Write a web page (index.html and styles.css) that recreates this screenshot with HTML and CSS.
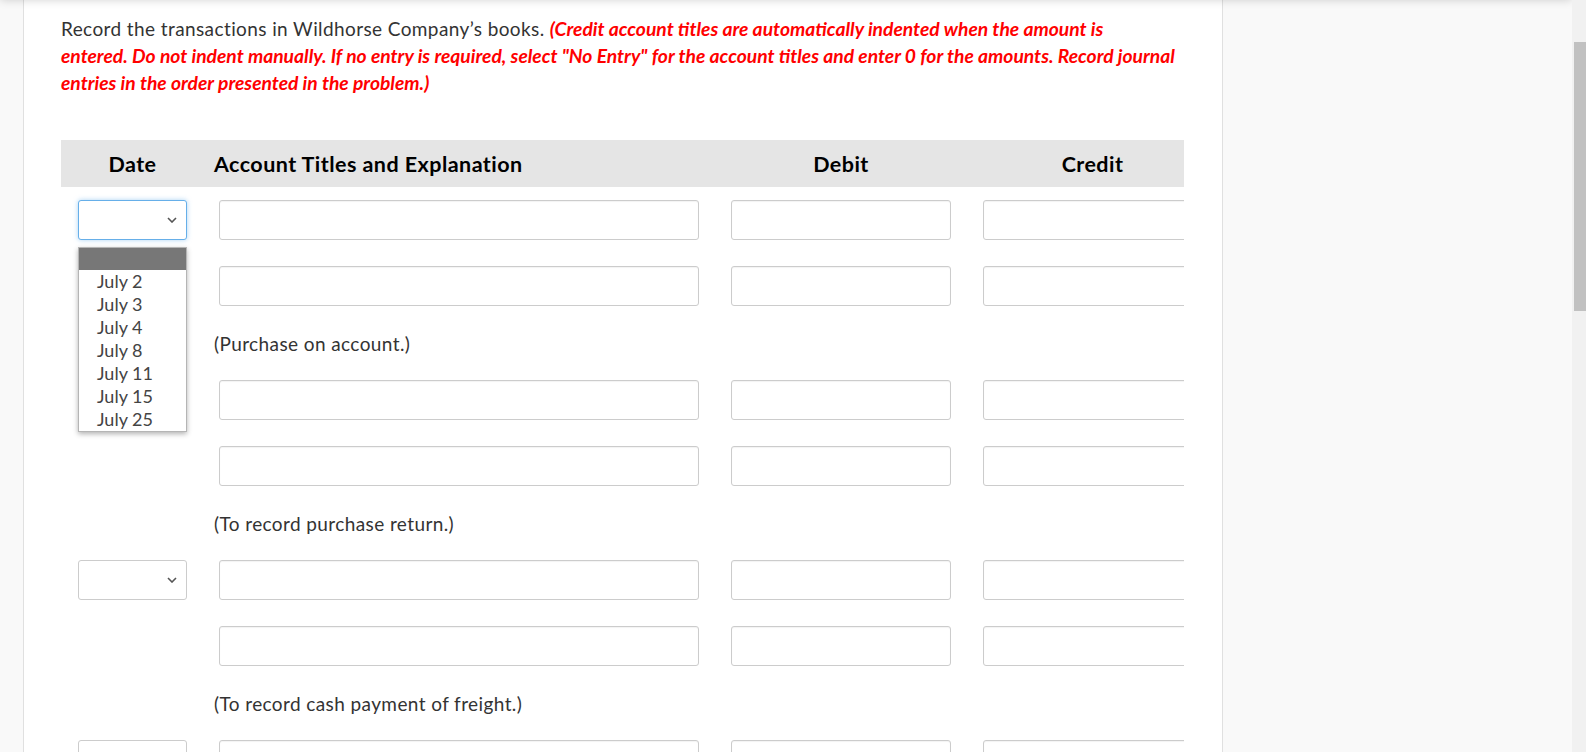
FILE: index.html
```html
<!DOCTYPE html>
<html lang="en">
<head>
<meta charset="utf-8">
<title>Journal entries</title>
<link rel="stylesheet" href="styles.css">
</head>
<body>
<div class="viewport">
  <div class="page">
    <div class="topshade"></div>
    <main class="panel">
      <p class="instructions">Record the transactions in Wildhorse Company’s books. <em class="note">(Credit account titles are automatically indented when the amount is<br>entered. Do not indent manually. If no entry is required, select "No Entry" for the account titles and enter 0 for the amounts. Record journal<br>entries in the order presented in the problem.)</em></p>

      <div class="journal">
        <div class="jrow head">
          <div class="h-date">Date</div>
          <div class="h-acct">Account Titles and Explanation</div>
          <div class="h-num">Debit</div>
          <div class="h-num">Credit</div>
        </div>

        <div class="entries">
          <div class="entry">
            <div class="jrow line">
              <div class="datecell">
                <div class="select focus">
                  <svg class="chev" width="10" height="6" viewBox="0 0 10 6"><polyline points="1,1 5,5 9,1" fill="none" stroke="#555" stroke-width="1.6"/></svg>
                </div>
                <div class="dropdown">
                  <div class="opt-blank"></div>
                  <div class="opt">July 2</div>
                  <div class="opt">July 3</div>
                  <div class="opt">July 4</div>
                  <div class="opt">July 8</div>
                  <div class="opt">July 11</div>
                  <div class="opt">July 15</div>
                  <div class="opt">July 25</div>
                </div>
              </div>
              <input class="field" type="text">
              <input class="field" type="text">
              <input class="field" type="text">
            </div>
            <div class="jrow line">
              <div></div>
              <input class="field" type="text">
              <input class="field" type="text">
              <input class="field" type="text">
            </div>
            <div class="jrow expl">
              <div></div>
              <div class="expl-text">(Purchase on account.)</div>
            </div>
          </div>

          <div class="entry">
            <div class="jrow line">
              <div></div>
              <input class="field" type="text">
              <input class="field" type="text">
              <input class="field" type="text">
            </div>
            <div class="jrow line">
              <div></div>
              <input class="field" type="text">
              <input class="field" type="text">
              <input class="field" type="text">
            </div>
            <div class="jrow expl">
              <div></div>
              <div class="expl-text">(To record purchase return.)</div>
            </div>
          </div>

          <div class="entry">
            <div class="jrow line">
              <div class="datecell">
                <div class="select">
                  <svg class="chev" width="10" height="6" viewBox="0 0 10 6"><polyline points="1,1 5,5 9,1" fill="none" stroke="#555" stroke-width="1.6"/></svg>
                </div>
              </div>
              <input class="field" type="text">
              <input class="field" type="text">
              <input class="field" type="text">
            </div>
            <div class="jrow line">
              <div></div>
              <input class="field" type="text">
              <input class="field" type="text">
              <input class="field" type="text">
            </div>
            <div class="jrow expl">
              <div></div>
              <div class="expl-text">(To record cash payment of freight.)</div>
            </div>
          </div>

          <div class="entry">
            <div class="jrow line">
              <div class="datecell">
                <div class="select">
                  <svg class="chev" width="10" height="6" viewBox="0 0 10 6"><polyline points="1,1 5,5 9,1" fill="none" stroke="#555" stroke-width="1.6"/></svg>
                </div>
              </div>
              <input class="field" type="text">
              <input class="field" type="text">
              <input class="field" type="text">
            </div>
          </div>
        </div>
      </div>
    </main>
  </div>
  <div class="scrollbar"><div class="thumb"></div></div>
</div>
</body>
</html>
```
FILE: styles.css
```css
html, body {
  margin: 0;
  padding: 0;
  height: 752px;
  overflow: hidden;
}

body {
  font-family: Lato, "Open Sans", sans-serif;
  color: #333;
}

.viewport {
  display: flex;
  height: 752px;
  background: #f9f9f9;
}

.page {
  flex: 1;
  position: relative;
  overflow: hidden;
}

.topshade {
  position: absolute;
  top: -20px;
  left: 0;
  right: 0;
  height: 20px;
  box-shadow: 0 0 10px rgba(0, 0, 0, 0.18);
  z-index: 5;
}

.panel {
  display: block;
  margin-left: 23px;
  width: 1200px;
  height: 100%;
  box-sizing: border-box;
  background: #fff;
  border-left: 1px solid #e0e0e0;
  border-right: 1px solid #e0e0e0;
  padding: 15px 38px 0 37px;
}

.instructions {
  margin: 0;
  width: 1140px;
  height: 81px;
  font-size: 19px;
  line-height: 27px;
  letter-spacing: 0.4px;
  color: #333;
}

.note {
  color: #f00;
  font-weight: 700;
  font-style: italic;
  font-size: 19.25px;
  line-height: 20px;
  letter-spacing: 0;
}

.journal {
  margin-top: 44px;
  overflow: hidden;
}

.jrow {
  display: grid;
  grid-template-columns: 109px 480px 220px 219px;
  column-gap: 32px;
  padding-left: 17px;
}

.head {
  background: #e5e5e5;
  height: 47px;
  align-items: center;
  font-weight: 700;
  font-size: 21.5px;
  letter-spacing: 0.45px;
  color: #000;
}

.h-date,
.h-num {
  text-align: center;
}

.h-acct {
  margin-left: -5px;
}

.entries {
  margin-top: 13px;
}

.line {
  height: 40px;
  margin-bottom: 26px;
}

.expl {
  margin-top: -2px;
  padding-bottom: 23px;
  font-size: 19px;
  line-height: 27px;
  letter-spacing: 0.4px;
  color: #333;
}

.expl-text {
  margin-left: -5px;
}

.field {
  display: block;
  box-sizing: border-box;
  height: 40px;
  margin: 0;
  border: 1px solid #ccc;
  border-radius: 3px;
  background: #fff;
  box-shadow: inset 0 1px 1px rgba(0, 0, 0, 0.05);
  padding: 0 10px;
  font: inherit;
  width: 100%;
}

.datecell {
  position: relative;
}

.select {
  box-sizing: border-box;
  height: 40px;
  border: 1px solid #ccc;
  border-radius: 3px;
  background: #fff;
  display: flex;
  align-items: center;
  justify-content: flex-end;
  padding-right: 9px;
}

.select.focus {
  border-color: #66afe9;
  box-shadow: 0 0 5px rgba(102, 175, 233, 0.55);
}

.chev {
  display: block;
}

.dropdown {
  position: absolute;
  top: 47px;
  left: 0;
  width: 109px;
  box-sizing: border-box;
  background: #fff;
  border: 1px solid #b5b5b5;
  box-shadow: 0 2px 5px rgba(0, 0, 0, 0.3);
  z-index: 10;
}

.opt-blank {
  height: 22px;
  background: #777;
}

.opt {
  height: 23px;
  line-height: 23px;
  padding-left: 18px;
  font-size: 18px;
  color: #444;
}

.scrollbar {
  width: 14px;
  flex: none;
  background: #f1f1f1;
}

.thumb {
  margin: 42px 0 0 2px;
  width: 12px;
  height: 269px;
  background: #c1c1c1;
}
```
